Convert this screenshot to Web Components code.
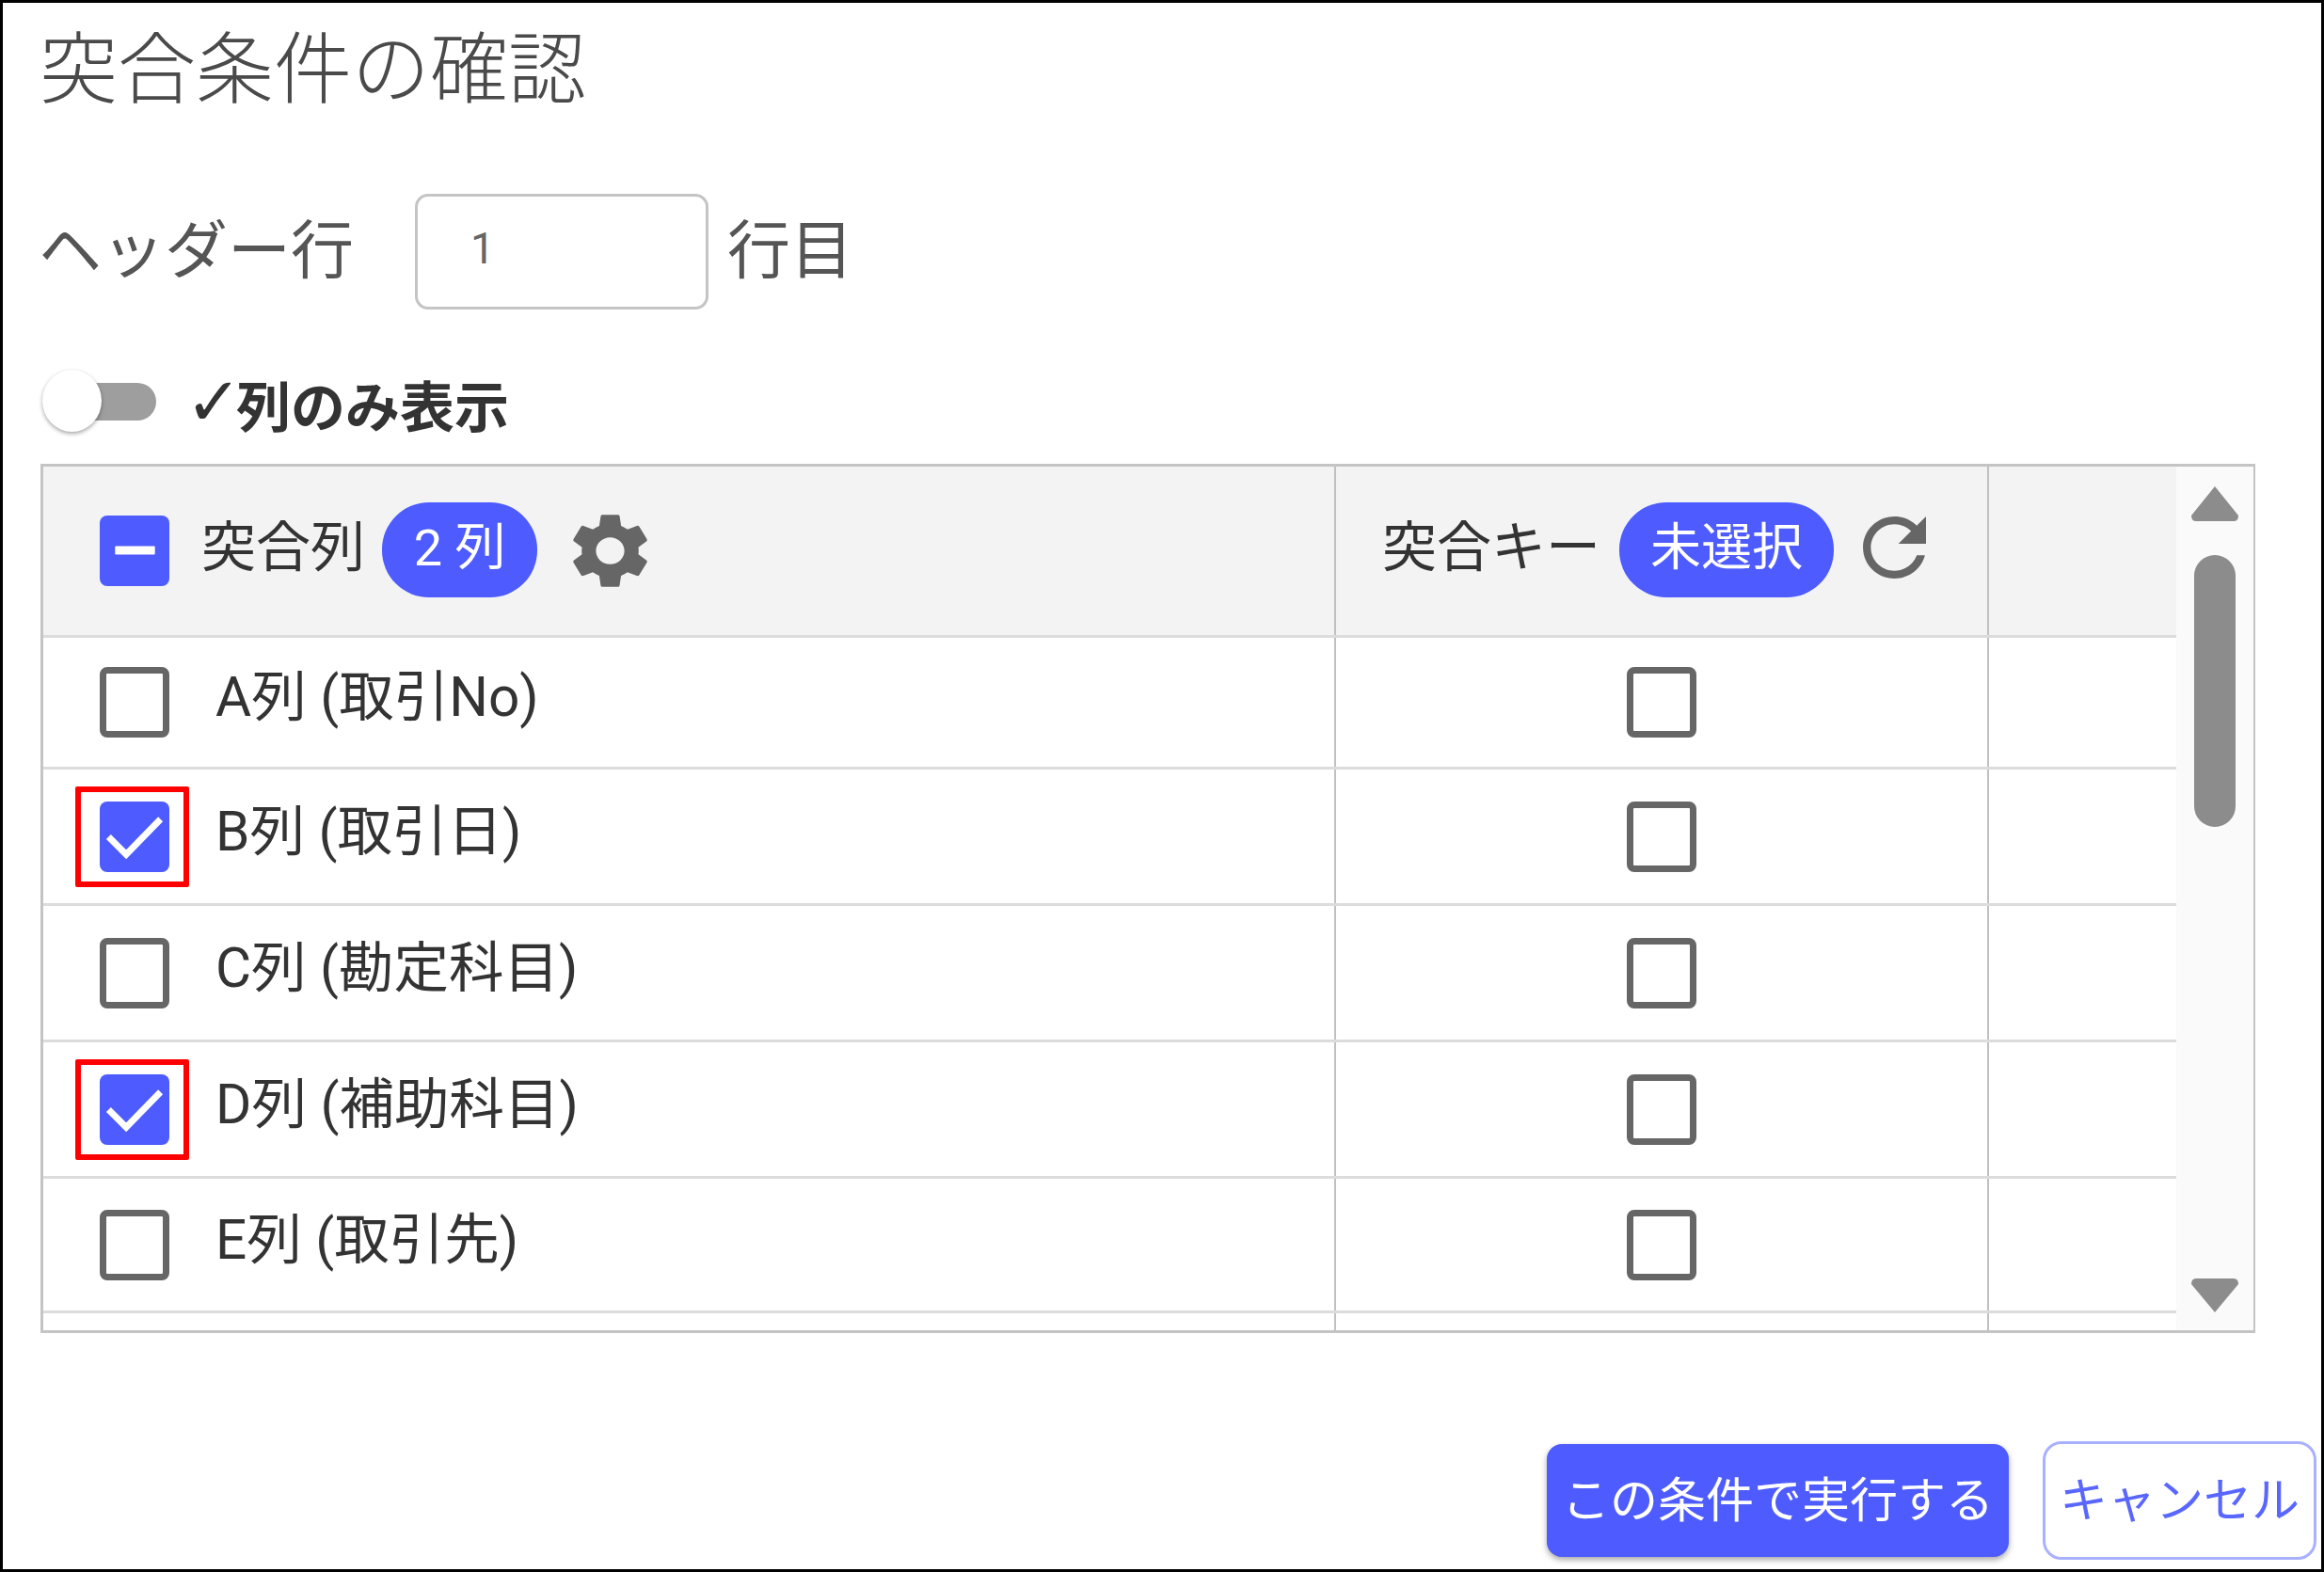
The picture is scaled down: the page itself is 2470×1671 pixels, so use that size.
<!DOCTYPE html>
<html lang="ja">
<head>
<meta charset="utf-8">
<title>突合条件の確認</title>
<style>
  html, body { margin: 0; padding: 0; background: #fff; }
  body { font-family: Roboto, "Noto Sans CJK JP", sans-serif; color: #333; }
</style>
</head>
<body>
<confirm-dialog>
  <span slot="title">突合条件の確認</span>
  <header-line slot="header"></header-line>
  <switch-line slot="switch">列のみ表示</switch-line>
  <match-table slot="table">
    <match-head slot="head"></match-head>
    <match-row label="A列 (取引No)" style="height:137px"></match-row>
    <match-row label="B列 (取引日)" checked style="height:142px"></match-row>
    <match-row label="C列 (勘定科目)" style="height:142px"></match-row>
    <match-row label="D列 (補助科目)" checked style="height:142px"></match-row>
    <match-row label="E列 (取引先)" style="height:140px"></match-row>
  </match-table>
  <action-button slot="actions" kind="primary">この条件で実行する</action-button>
  <action-button slot="actions" kind="outline">キャンセル</action-button>
</confirm-dialog>

<script>
const JP = `Roboto, "Noto Sans CJK JP", sans-serif`;

class ConfirmDialog extends HTMLElement {
  constructor() {
    super();
    this.attachShadow({ mode: "open" });
    this.shadowRoot.innerHTML = `
      <style>
        :host {
          display: flex;
          flex-direction: column;
          box-sizing: border-box;
          width: 2470px;
          height: 1671px;
          border: 3px solid #000;
          padding: 0 5px 10px 39px;
          font-family: ${JP};
        }
        .title {
          height: 108px;
          margin-top: 18px;
          font-size: 83px;
          line-height: 108px;
          font-weight: 300;
          color: #4a4a4a;
        }
        .header { margin-top: 77px; }
        .switch { margin-top: 64px; }
        .table { margin: 33px 65px 0 1px; }
        .actions {
          margin-top: auto;
          display: flex;
          justify-content: flex-end;
          align-items: center;
          gap: 36px;
        }
      </style>
      <div class="title"><slot name="title"></slot></div>
      <div class="header"><slot name="header"></slot></div>
      <div class="switch"><slot name="switch"></slot></div>
      <div class="table"><slot name="table"></slot></div>
      <div class="actions"><slot name="actions"></slot></div>
    `;
  }
}

class HeaderLine extends HTMLElement {
  constructor() {
    super();
    this.attachShadow({ mode: "open" });
    this.shadowRoot.innerHTML = `
      <style>
        :host {
          display: flex;
          align-items: center;
          height: 123px;
          font-size: 67px;
          color: #555;
        }
        .label { width: 399px; margin-bottom: 14px; margin-left: -1px; }
        .box {
          box-sizing: border-box;
          width: 312px;
          height: 123px;
          margin-left: 1px;
          border: 3px solid #c4c4c4;
          border-radius: 14px;
          padding: 0 0 8px 56px;
          display: flex;
          align-items: center;
          font-size: 46px;
          color: #666;
        }
        .unit { margin-left: 20px; margin-bottom: 14px; }
      </style>
      <span class="label">ヘッダー行</span>
      <div class="box">1</div>
      <span class="unit">行目</span>
    `;
  }
}

class SwitchLine extends HTMLElement {
  constructor() {
    super();
    this.attachShadow({ mode: "open" });
    this.shadowRoot.innerHTML = `
      <style>
        :host {
          display: flex;
          align-items: center;
          height: 67px;
          font-size: 58px;
          font-weight: 700;
          color: #333;
        }
        .toggle {
          position: relative;
          width: 112px;
          height: 40px;
          margin-left: 12px;
          border-radius: 0 20px 20px 0;
          background: #9e9e9e;
        }
        .knob {
          position: absolute;
          left: -9px;
          top: -14px;
          width: 63px;
          height: 66px;
          border-radius: 50%;
          background: #fff;
          box-shadow: 0 2px 4px rgba(0, 0, 0, .35);
        }
        .tick {
          width: 54px;
          margin-left: 31px;
          margin-top: 2px;
          font-family: "DejaVu Sans", sans-serif;
          font-size: 72px;
          line-height: 67px;
          font-weight: 400;
        }
        .text { margin-top: 4px; }
      </style>
      <div class="toggle"><div class="knob"></div></div>
      <span class="tick">✓</span>
      <span class="text"><slot></slot></span>
    `;
  }
}

class CheckMark extends HTMLElement {
  static get observedAttributes() { return ["state", "marked"]; }
  constructor() {
    super();
    this.attachShadow({ mode: "open" });
  }
  connectedCallback() { this.render(); }
  attributeChangedCallback() { this.render(); }
  render() {
    const state = this.getAttribute("state") || "off";
    let glyph = "";
    if (state === "on") {
      glyph = `<svg viewBox="0 0 74 76"><polyline points="9,38 28,57 65,19" fill="none" stroke="#fff" stroke-width="7"/></svg>`;
    } else if (state === "some") {
      glyph = `<svg viewBox="0 0 74 76"><rect x="16" y="33" width="43" height="9" fill="#fff" rx="1"/></svg>`;
    }
    this.shadowRoot.innerHTML = `
      <style>
        :host {
          position: relative;
          display: block;
          flex: none;
          box-sizing: border-box;
          width: 74px;
          height: 75px;
          border-radius: 8px;
          border: 7px solid #666;
          background: #fff;
        }
        :host([state="on"]), :host([state="some"]) {
          border: 0;
          background: #4d5bff;
        }
        svg { display: block; width: 100%; height: 100%; }
        .mark {
          position: absolute;
          left: -26px;
          right: -21px;
          top: -16px;
          bottom: -16px;
          border: 6px solid #f00;
          border-radius: 2px;
        }
      </style>
      ${glyph}
      ${this.hasAttribute("marked") ? `<div class="mark"></div>` : ""}
    `;
  }
}

class CountBadge extends HTMLElement {
  constructor() {
    super();
    this.attachShadow({ mode: "open" });
    this.shadowRoot.innerHTML = `
      <style>
        :host {
          display: flex;
          flex: none;
          align-items: center;
          justify-content: center;
          height: 101px;
          padding-bottom: 14px;
          margin-bottom: 3px;
          box-sizing: border-box;
          border-radius: 50px;
          background: #4d5bff;
          color: #fff;
          font-size: 54px;
        }
      </style>
      <slot></slot>
    `;
  }
}

class MatchHead extends HTMLElement {
  constructor() {
    super();
    this.attachShadow({ mode: "open" });
    this.shadowRoot.innerHTML = `
      <style>
        :host {
          display: grid;
          grid-template-columns: 1374px 694px 1fr;
          height: 179px;
          background: #f3f3f3;
          border-bottom: 3px solid #dcdcdc;
          font-size: 58px;
          color: #333;
        }
        .cell {
          display: flex;
          align-items: center;
          box-sizing: border-box;
          border-right: 2px solid #c0c0c0;
        }
        .cell:last-child { border-right: 0; }
        .first { padding-left: 60px; }
        .first span { margin-left: 34px; margin-bottom: 18px; }
        .first count-badge { width: 165px; margin-left: 18px; }
        .gear { width: 79px; height: 79px; margin-left: 38px; fill: #666; }
        .second { padding-left: 49px; }
        .second span { margin-bottom: 18px; }
        .second count-badge { width: 228px; margin-left: 20px; }
        .reload { width: 67px; height: 66px; margin-left: 31px; margin-bottom: 8px; fill: #666; }
      </style>
      <div class="cell first">
        <check-mark state="some"></check-mark>
        <span>突合列</span>
        <count-badge>2 列</count-badge>
        <svg class="gear" viewBox="2.6 2.1 18.8 19.8" preserveAspectRatio="none"><path d="M19.14 12.94c.04-.3.06-.61.06-.94 0-.32-.02-.64-.07-.94l2.03-1.58c.18-.14.23-.41.12-.61l-1.92-3.32c-.12-.22-.37-.29-.59-.22l-2.39.96c-.5-.38-1.03-.7-1.62-.94l-.36-2.54c-.04-.24-.24-.41-.48-.41h-3.84c-.24 0-.43.17-.47.41l-.36 2.54c-.59.24-1.13.57-1.62.94l-2.39-.96c-.22-.08-.47 0-.59.22L2.74 8.87c-.12.21-.08.47.12.61l2.03 1.58c-.05.3-.09.63-.09.94s.02.64.07.94l-2.03 1.58c-.18.14-.23.41-.12.61l1.92 3.32c.12.22.37.29.59.22l2.39-.96c.5.38 1.03.7 1.62.94l.36 2.54c.05.24.24.41.48.41h3.84c.24 0 .44-.17.47-.41l.36-2.54c.59-.24 1.13-.56 1.62-.94l2.39.96c.22.08.47 0 .59-.22l1.92-3.32c.12-.22.07-.47-.12-.61l-2.01-1.58zM12 15.6c-1.98 0-3.6-1.62-3.6-3.6s1.62-3.6 3.6-3.6 3.6 1.62 3.6 3.6-1.62 3.6-3.6 3.6z"/></svg>
      </div>
      <div class="cell second">
        <span>突合キー</span>
        <count-badge>未選択</count-badge>
        <svg class="reload" viewBox="4 4 16 16" preserveAspectRatio="none"><path d="M17.65 6.35C16.2 4.9 14.21 4 12 4c-4.42 0-7.99 3.58-7.99 8s3.57 8 7.99 8c3.73 0 6.84-2.55 7.73-6h-2.08c-.82 2.33-3.04 4-5.65 4-3.31 0-6-2.69-6-6s2.69-6 6-6c1.66 0 3.14.69 4.22 1.78L13 11h7V4l-2.35 2.35z"/></svg>
      </div>
      <div class="cell"></div>
    `;
  }
}

class MatchRow extends HTMLElement {
  constructor() {
    super();
    this.attachShadow({ mode: "open" });
  }
  connectedCallback() {
    const on = this.hasAttribute("checked");
    this.shadowRoot.innerHTML = `
      <style>
        :host {
          display: grid;
          grid-template-columns: 1374px 694px 1fr;
          height: 141px;
          background: #fff;
          border-bottom: 3px solid #dcdcdc;
          font-size: 58.5px;
          color: #333;
        }
        .cell {
          display: flex;
          align-items: center;
          box-sizing: border-box;
          border-right: 2px solid #c0c0c0;
        }
        .cell:last-child { border-right: 0; }
        .first { padding-left: 60px; }
        .label { margin-left: 49px; margin-bottom: 22px; }
        .second { justify-content: center; }
      </style>
      <div class="cell first">
        <check-mark ${on ? `state="on" marked` : ""}></check-mark>
        <span class="label">${this.getAttribute("label")}</span>
      </div>
      <div class="cell second"><check-mark></check-mark></div>
      <div class="cell"></div>
    `;
  }
}

class ScrollTrack extends HTMLElement {
  constructor() {
    super();
    this.attachShadow({ mode: "open" });
    this.shadowRoot.innerHTML = `
      <style>
        :host {
          display: flex;
          flex-direction: column;
          align-items: center;
          flex: none;
          width: 82px;
          height: 100%;
          background: #fafafa;
        }
        svg { display: block; fill: #8c8c8c; flex: none; }
        .up { margin-top: 21px; }
        .thumb {
          width: 44px;
          height: 289px;
          margin-top: 36px;
          border-radius: 22px;
          background: #8c8c8c;
        }
        .down { margin-top: auto; margin-bottom: 19px; }
      </style>
      <svg class="up" width="50" height="37" viewBox="0 0 50 37"><path d="M25 0 L50 31 Q50 37 45 37 L5 37 Q0 37 0 31 Z"/></svg>
      <div class="thumb"></div>
      <svg class="down" width="50" height="36" viewBox="0 0 50 36"><path d="M25 36 L50 6 Q50 0 45 0 L5 0 Q0 0 0 6 Z"/></svg>
    `;
  }
}

class MatchTable extends HTMLElement {
  constructor() {
    super();
    this.attachShadow({ mode: "open" });
    this.shadowRoot.innerHTML = `
      <style>
        :host {
          display: flex;
          box-sizing: border-box;
          height: 924px;
          border: 3px solid #c4c4c4;
          border-right-width: 2px;
        }
        .body { flex: 1; min-width: 0; display: flex; flex-direction: column; }
        .rest {
          flex: 1;
          display: grid;
          grid-template-columns: 1374px 694px 1fr;
        }
        .rest div { border-right: 2px solid #c0c0c0; }
        .rest div:last-child { border-right: 0; }
      </style>
      <div class="body">
        <slot name="head"></slot>
        <slot></slot>
        <div class="rest"><div></div><div></div><div></div></div>
      </div>
      <scroll-track></scroll-track>
    `;
  }
}

class ActionButton extends HTMLElement {
  constructor() {
    super();
    this.attachShadow({ mode: "open" });
    this.shadowRoot.innerHTML = `
      <style>
        :host {
          display: flex;
          align-items: center;
          justify-content: center;
          box-sizing: border-box;
          padding-bottom: 8px;
          font-size: 51px;
          white-space: nowrap;
        }
        :host([kind="primary"]) {
          width: 491px;
          height: 120px;
          border-radius: 16px;
          background: #4d5bff;
          color: #fff;
          box-shadow: 0 3px 6px rgba(0, 0, 0, .35);
        }
        :host([kind="outline"]) {
          width: 291px;
          height: 126px;
          border: 3px solid #a9b1ff;
          border-radius: 20px;
          background: #fff;
          color: #5a67ff;
          font-size: 51px;
        }
      </style>
      <slot></slot>
    `;
  }
}

customElements.define("check-mark", CheckMark);
customElements.define("count-badge", CountBadge);
customElements.define("scroll-track", ScrollTrack);
customElements.define("header-line", HeaderLine);
customElements.define("switch-line", SwitchLine);
customElements.define("match-head", MatchHead);
customElements.define("match-row", MatchRow);
customElements.define("match-table", MatchTable);
customElements.define("action-button", ActionButton);
customElements.define("confirm-dialog", ConfirmDialog);
</script>
</body>
</html>
